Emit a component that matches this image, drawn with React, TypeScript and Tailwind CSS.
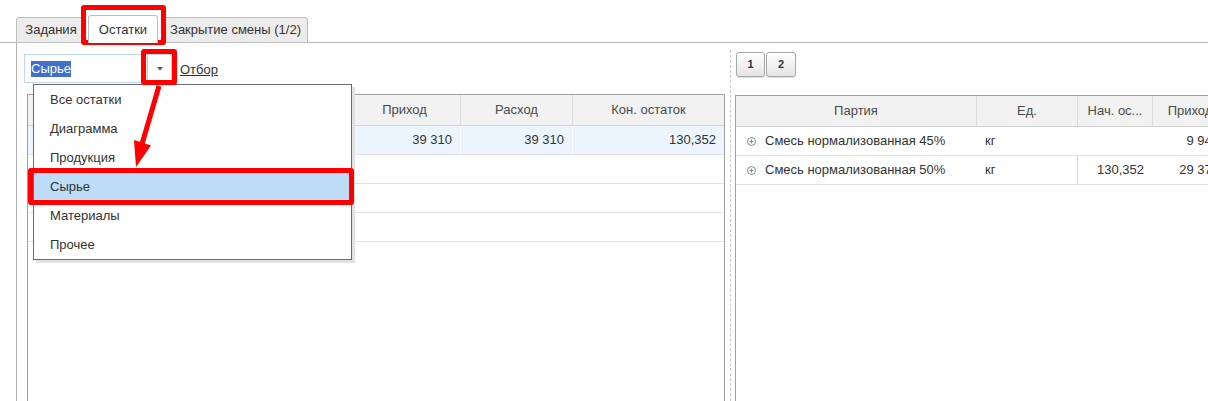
const leftRows = [
  { vals: ["", "", "39 310", "39 310", "130,352"], selected: true },
  { vals: ["", "", "", "", ""], selected: false },
  { vals: ["", "", "", "", ""], selected: false },
  { vals: ["", "", "", "", ""], selected: false },
];

const menuItems = ["Все остатки", "Диаграмма", "Продукция", "Сырье", "Материалы", "Прочее"];

const PlusIcon = () => (
  <svg width="9" height="9" viewBox="0 0 9 9" className="shrink-0">
    <circle cx="4.5" cy="4.5" r="4" fill="none" stroke="#8a8a8a" strokeWidth="1" />
    <path d="M2.5 4.5h4M4.5 2.5v4" stroke="#8a8a8a" strokeWidth="1" />
  </svg>
);

export default function App() {
  return (
    <div className="relative w-[1208px] h-[401px] overflow-hidden bg-white font-['Liberation_Sans',Arial,sans-serif] text-[13px] text-[#333]">
      {/* tabs */}
      <div className="flex items-end h-[43px] pl-[16px] border-b border-[#b4b4b4]">
        <div className="h-[26px] w-[70px] -mb-px flex items-center justify-center bg-[#ececec] border border-[#bdbdbd] rounded-t-[3px]">
          Задания
        </div>
        <div className="relative z-10 h-[28px] w-[70px] ml-[2px] -mb-px flex items-center justify-center bg-white border border-b-0 border-[#bdbdbd] rounded-t-[3px]">
          Остатки
        </div>
        <div className="h-[26px] w-[145px] ml-[5px] -mb-px flex items-center justify-center bg-[#ececec] border border-[#bdbdbd] rounded-t-[3px]">
          Закрытие смены (1/2)
        </div>
      </div>

      <div className="flex h-[358px]">
        {/* left panel */}
        <div className="ml-[16px] w-[714px] shrink-0 border-l border-[#b0b0b0] pl-[7px] pt-[11px] flex flex-col">
          <div className="flex items-center h-[29px]">
            <div className="flex h-[29px] w-[148px] border border-[#bcd8f4] bg-white">
              <div className="w-[122px] pl-[6px] flex items-center">
                <span className="bg-[#3f6fcf] text-white leading-[16px]">Сырье</span>
              </div>
              <div className="flex-1 flex items-center justify-center border-l border-[#c4c4c4] my-[2px]">
                <svg width="6" height="4" viewBox="0 0 6 4">
                  <path d="M0 0h6L3 3.5z" fill="#555" />
                </svg>
              </div>
            </div>
            <a href="#" className="ml-[8px] mt-[2px] underline text-[#333]">
              Отбор
            </a>
          </div>

          <div className="mt-[11px] ml-[3px] w-[698px] flex-1 border-l border-r border-t border-[#a0a0a0] flex flex-col">
            <div className="flex h-[31px] bg-[#f2f2f2] border-b border-[#d4d4d4] text-[#4a4a4a]">
              <div className="w-[212px]" />
              <div className="w-[108px] border-l border-[#dcdcdc]" />
              <div className="w-[112px] border-l border-[#dcdcdc] flex items-center justify-center">Приход</div>
              <div className="w-[112px] border-l border-[#dcdcdc] flex items-center justify-center">Расход</div>
              <div className="flex-1 border-l border-[#dcdcdc] flex items-center justify-center">Кон. остаток</div>
            </div>
            {leftRows.map((r, i) => (
              <div
                key={i}
                className={`flex h-[29px] border-b border-[#e2e2e2] ${r.selected ? "bg-[#ecf5fd]" : ""}`}
              >
                <div className="w-[212px] flex items-center pl-[8px]">{r.vals[0]}</div>
                <div className={`w-[108px] border-l flex items-center justify-end pr-[8px] ${r.selected ? "border-white" : "border-transparent"}`}>{r.vals[1]}</div>
                <div className={`w-[112px] border-l flex items-center justify-end pr-[8px] ${r.selected ? "border-white" : "border-transparent"}`}>{r.vals[2]}</div>
                <div className={`w-[112px] border-l flex items-center justify-end pr-[8px] ${r.selected ? "border-white" : "border-transparent"}`}>{r.vals[3]}</div>
                <div className={`flex-1 border-l flex items-center justify-end pr-[8px] ${r.selected ? "border-white" : "border-transparent"}`}>{r.vals[4]}</div>
              </div>
            ))}
          </div>
        </div>

        {/* splitter */}
        <div className="mt-[7px] w-px shrink-0 border-l border-dashed border-[#c8c8c8]" />

        {/* right panel */}
        <div className="flex-1 min-w-0 overflow-hidden pl-[4px] pt-[9px] flex flex-col">
          <div className="flex ml-px">
            <div className="w-[29px] h-[25px] flex items-center justify-center border border-[#a8a8a8] rounded-[3px] bg-gradient-to-b from-white to-[#e4e4e4] text-[11px] font-bold text-[#333] shadow-[0_1px_1px_rgba(0,0,0,0.15)]">
              1
            </div>
            <div className="w-[30px] h-[25px] ml-px flex items-center justify-center border border-[#a8a8a8] rounded-[3px] bg-gradient-to-b from-white to-[#e4e4e4] text-[11px] font-bold text-[#333] shadow-[0_1px_1px_rgba(0,0,0,0.15)]">
              2
            </div>
          </div>

          <div className="mt-[18px] flex-1 border-l border-t border-[#a0a0a0] flex flex-col">
            <div className="flex h-[31px] bg-[#f2f2f2] border-b border-[#d4d4d4] text-[#4a4a4a] whitespace-nowrap">
              <div className="w-[240px] shrink-0 flex items-center justify-center">Партия</div>
              <div className="w-[101px] shrink-0 border-l border-[#dcdcdc] flex items-center justify-center">Ед.</div>
              <div className="w-[75px] shrink-0 border-l border-[#dcdcdc] flex items-center justify-center">Нач. ос...</div>
              <div className="w-[75px] shrink-0 border-l border-[#dcdcdc] flex items-center justify-center">Приход</div>
            </div>
            <div className="flex h-[29px] border-b border-[#e2e2e2] whitespace-nowrap">
              <div className="w-[240px] shrink-0 flex items-center gap-[9px] pl-[11px]">
                <PlusIcon />
                Смесь нормализованная 45%
              </div>
              <div className="w-[101px] shrink-0 border-l border-transparent flex items-center pl-[8px]">кг</div>
              <div className="w-[75px] shrink-0 border-l border-transparent flex items-center justify-end pr-[8px]"></div>
              <div className="w-[75px] shrink-0 border-l border-transparent flex items-center justify-end pr-[8px]">9 940</div>
            </div>
            <div className="flex h-[29px] border-b border-[#e2e2e2] whitespace-nowrap">
              <div className="w-[240px] shrink-0 flex items-center gap-[9px] pl-[11px]">
                <PlusIcon />
                Смесь нормализованная 50%
              </div>
              <div className="w-[101px] shrink-0 border-l border-transparent flex items-center pl-[8px]">кг</div>
              <div className="w-[75px] shrink-0 border-l border-[#dcdcdc] flex items-center justify-end pr-[8px]">130,352</div>
              <div className="w-[75px] shrink-0 border-l border-transparent flex items-center justify-end pr-[8px]">29 370</div>
            </div>
          </div>
        </div>
      </div>

      {/* dropdown list */}
      <div className="absolute left-[33px] top-[84px] w-[319px] h-[176px] bg-white border border-[#6b6b6b] shadow-[3px_3px_0_#e2e2e2] flex flex-col">
        {menuItems.map((m) => (
          <div
            key={m}
            className={`h-[29px] shrink-0 flex items-center pl-[16px] ${m === "Сырье" ? "bg-[#bcdcf8]" : ""}`}
          >
            {m}
          </div>
        ))}
      </div>

      {/* annotations */}
      <div className="absolute left-[81px] top-[5px] w-[85px] h-[40px] border-[5px] border-[#ff0000] rounded-[3px]" />
      <div className="absolute left-[141px] top-[49px] w-[36px] h-[36px] border-[5px] border-[#ff0000] rounded-[3px]" />
      <div className="absolute left-[28px] top-[168px] w-[326px] h-[37px] border-[5px] border-[#ff0000] rounded-[3px]" />
      <svg className="absolute left-0 top-0" width="1208" height="401" viewBox="0 0 1208 401">
        <path d="M159 86 L142 144" stroke="#ff0000" strokeWidth="5" fill="none" />
        <path d="M134 140 L151 145.5 L136 167 Z" fill="#ff0000" />
      </svg>
    </div>
  );
}
